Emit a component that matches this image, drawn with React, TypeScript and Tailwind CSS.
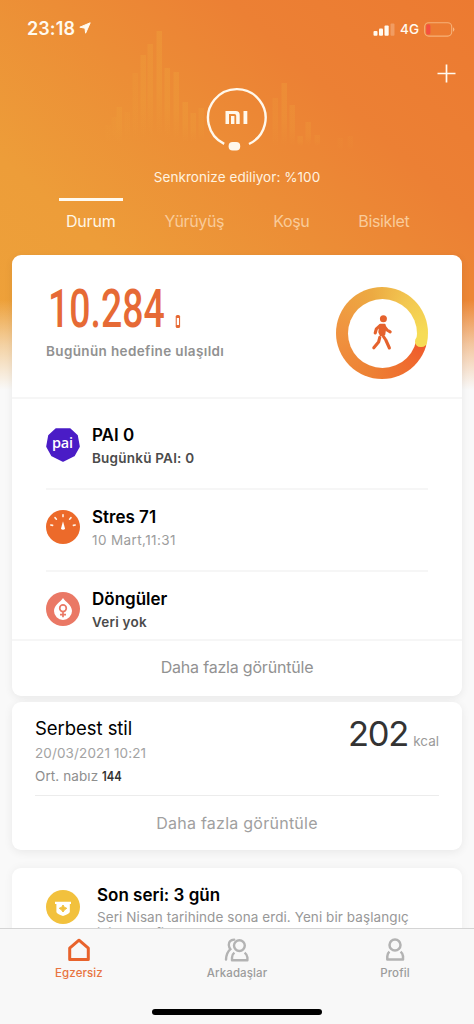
import type { ReactNode } from "react";

const TABS = [
  { label: "Durum", active: true },
  { label: "Yürüyüş", active: false },
  { label: "Koşu", active: false },
  { label: "Bisiklet", active: false },
];

// [x, top, bottom, opacity]
const LEFT_BARS = [
  [107, 125, 143, 0.06],
  [113, 117, 143, 0.1],
  [118, 107, 143, 0.2],
  [126, 112, 140, 0.08],
  [134, 73, 140, 0.14],
  [142, 55, 138, 0.26],
  [149, 44, 136, 0.26],
  [158, 31, 136, 0.32],
  [166, 68, 138, 0.28],
  [175, 72, 140, 0.28],
  [184, 102, 142, 0.26],
  [192, 113, 142, 0.22],
  [200, 108, 140, 0.18],
];

const RIGHT_BARS = [
  [274, 98, 146, 0.16],
  [283, 83, 146, 0.26],
  [291, 105, 146, 0.22],
  [299, 136, 146, 0.18],
  [307, 122, 146, 0.2],
  [316, 135, 146, 0.14],
  [339, 138, 150, 0.06],
  [349, 136, 150, 0.07],
];

function WaveBars() {
  return (
    <svg
      className="pointer-events-none absolute top-0 left-0"
      width="474"
      height="250"
      viewBox="0 0 474 250"
    >
      <defs>
        <linearGradient id="bar" x1="0" y1="0" x2="0" y2="1">
          <stop offset="0" stopColor="#f0a93c" />
          <stop offset="0.55" stopColor="#f0a93c" stopOpacity="0.8" />
          <stop offset="1" stopColor="#f0a93c" stopOpacity="0" />
        </linearGradient>
      </defs>
      {[...LEFT_BARS, ...RIGHT_BARS].map(([x, top, bottom, opacity]) => (
        <rect
          key={x}
          x={x - 1.5}
          y={top}
          width="5.5"
          height={bottom - top}
          fill="url(#bar)"
          opacity={opacity}
        />
      ))}
    </svg>
  );
}

function StatusBar() {
  return (
    <div className="flex h-14 items-center justify-between pr-[19px] pl-[27px] text-[#fffaf0]">
      <div className="flex items-center gap-[4px]">
        <span className="text-[18px] font-semibold tracking-[0.1px]">23:18</span>
        <svg width="12" height="12" viewBox="0 0 12 12" fill="currentColor">
          <path
            d="M11.2 0.8 L6.6 11.2 L6 6.2 L0.8 5.2 Z"
            stroke="currentColor"
            strokeWidth="1"
            strokeLinejoin="round"
          />
        </svg>
      </div>
      <div className="flex items-center pt-[2px]">
        <svg width="22" height="13" viewBox="0 0 22 13" fill="currentColor">
          <rect x="0.5" y="8" width="4" height="4.7" rx="1" />
          <rect x="6" y="5.6" width="4" height="7.1" rx="1" />
          <rect x="11.5" y="2.5" width="4.2" height="10.2" rx="1" />
          <rect x="17.5" y="0.5" width="4" height="12.2" rx="1" opacity="0.25" />
        </svg>
        <span className="ml-[5px] text-[13.5px] font-medium">4G</span>
        <svg className="ml-[5px]" width="31" height="15" viewBox="0 0 31 15">
          <rect
            x="0.7"
            y="0.7"
            width="27"
            height="13.4"
            rx="4"
            fill="none"
            stroke="#fbc796"
            strokeOpacity="0.7"
            strokeWidth="1.1"
          />
          <rect x="2.2" y="2.3" width="4.2" height="10.2" rx="1.6" fill="#f4503f" />
          <path d="M29 5.2 a2.6 2.6 0 0 1 0 4.6 Z" fill="#fbc796" fillOpacity="0.8" />
        </svg>
      </div>
    </div>
  );
}

function DeviceRing() {
  return (
    <svg width="62" height="66" viewBox="0 0 62 66">
      <path
        d="M18.2 57.8 A28.8 28.8 0 1 1 43 58"
        fill="none"
        stroke="#fff8ec"
        strokeWidth="2.4"
      />
      <rect x="22.6" y="56" width="11.6" height="8.4" rx="4" fill="#fff8ec" />
      <g fill="#fff8ec">
        <path d="M19.5 25 h10.2 q4 0 4 4 v9 h-3.5 v-8.3 q0 -1.7 -1.7 -1.7 h-5.5 v10 h-3.5 Z" />
        <rect x="25" y="30" width="3.4" height="8" />
        <rect x="37.5" y="25" width="3.8" height="13" />
      </g>
    </svg>
  );
}

function Header() {
  return (
    <header className="relative h-[255px]">
      <WaveBars />
      <div className="relative">
        <StatusBar />
        <div className="flex h-[30px] items-center justify-end pt-1 pr-[18px]">
          <svg width="19" height="19" viewBox="0 0 19 19" stroke="#fffaf0" strokeWidth="1.7">
            <path d="M9.5 0.5 V18.5 M0.5 9.5 H18.5" />
          </svg>
        </div>
        <div className="flex h-[66px] justify-center">
          <DeviceRing />
        </div>
        <p className="mt-[16px] text-center text-[13.5px] leading-[18px] tracking-[0.06px] text-[#fff3e0]">
          Senkronize ediliyor: %100
        </p>
        <nav className="mt-[12px] flex gap-[49px] pl-[66px]">
          {TABS.map((tab) => (
            <div
              key={tab.label}
              className={`-mx-[7px] border-t-[3px] px-[7px] pt-[9px] text-[16px] leading-[22px] whitespace-nowrap ${
                tab.active
                  ? "border-[#fffaf0] tracking-[-0.2px] text-[#fff6e6]"
                  : "border-transparent tracking-[-0.35px] text-[#f9cb9a]"
              }`}
            >
              {tab.label}
            </div>
          ))}
        </nav>
      </div>
    </header>
  );
}

function GoalRing() {
  return (
    <div className="relative flex size-[92px] items-center justify-center rounded-full bg-[conic-gradient(from_106deg,#ef5a2c_0deg,#ef6a2e_30deg,#ed8134_90deg,#f09440_170deg,#ecaa42_240deg,#f2c651_290deg,#f6dc55_345deg,#f6dc55_360deg)]">
      <div className="flex size-[69px] items-center justify-center rounded-full bg-white">
        <svg width="22" height="36" viewBox="0 0 22 36" fill="none">
          <circle cx="12.4" cy="3.8" r="3.5" fill="#e5622d" />
          <path
            d="M9.2 9.6 h4.4 l0.8 3 l-1 6.8 l-3.8 0.6 l-1.4 -3 Z"
            fill="#e5622d"
            stroke="#e5622d"
            strokeWidth="1.8"
            strokeLinejoin="round"
          />
          <g stroke="#e5622d" strokeWidth="3.1" strokeLinecap="round" strokeLinejoin="round">
            <path d="M9 10.6 L5.4 13.8 L4.2 18" />
            <path d="M14 12.4 L16 15 L19.2 16.8" />
            <path d="M10.8 19 L14.8 25 L18.4 33" />
            <path d="M8.8 22.4 L7.6 27 L2.8 32.8" />
          </g>
        </svg>
      </div>
      {/* rounded tip of the progress arc */}
      <span className="absolute top-[48.5px] left-[79.3px] size-[11.6px] rounded-full bg-[#f6dc55]" />
    </div>
  );
}

function PaiIcon() {
  return (
    <div className="relative size-[34px] shrink-0">
      <svg className="absolute inset-0" width="34" height="34" viewBox="0 0 34 34">
        <path
          d="M10 1 H24 L31 7.5 L33 18.5 L28 27.5 L17 33 L6 27.5 L1 18.5 L3 7.5 Z"
          fill="#4a1cc6"
          stroke="#4a1cc6"
          strokeWidth="1.6"
          strokeLinejoin="round"
        />
      </svg>
      <span className="relative -ml-[1px] block text-center font-['Open_Sans'] text-[14.5px] leading-[29px] font-semibold tracking-[-0.2px] text-white">
        pai
      </span>
    </div>
  );
}

function StressIcon() {
  return (
    <svg className="shrink-0" width="34" height="34" viewBox="0 0 34 34">
      <circle cx="17" cy="17" r="17" fill="#ec6a2a" />
      <g stroke="#fff3e6" strokeWidth="1.6" strokeLinecap="round">
        <path d="M17 4.8 V6.6" />
        <path d="M9 7.6 L10.4 9.2" />
        <path d="M25 7.6 L23.6 9.2" />
        <path d="M4.8 15 L6.6 15.4" />
        <path d="M29.2 15 L27.4 15.4" />
      </g>
      <path d="M17 11.2 L19 18.4 Q18.6 19.8 17 19.8 Q15.4 19.8 15 18.4 Z" fill="#fff" />
    </svg>
  );
}

function CycleIcon() {
  return (
    <svg className="shrink-0" width="34" height="34" viewBox="0 0 34 34">
      <circle cx="17" cy="17" r="17" fill="#ea7865" />
      <path
        d="M17 6 C19.5 10 26 13 26 19 A9 9 0 0 1 8 19 C8 13 14.5 10 17 6 Z"
        fill="#fff"
      />
      <g stroke="#ea7865" strokeWidth="1.7" fill="none">
        <circle cx="17" cy="16.2" r="3.3" />
        <path d="M17 19.5 V25.2 M14 22.6 H20" />
      </g>
    </svg>
  );
}

function BadgeIcon() {
  return (
    <svg className="shrink-0" width="34" height="34" viewBox="0 0 34 34">
      <circle cx="17" cy="17" r="17" fill="#f2c13d" />
      <path d="M9 11.8 H25 V14 H23.8 V22 Q23.2 24 17 26 Q10.8 24 10.4 22 V14 H9 Z" fill="#fff" />
      <path
        d="M17 15 l1.2 2.2 2.6 1.1 -2.3 1.5 -1.5 2.2 -1.5 -2.2 -2.3 -1.5 2.6 -1.1 Z"
        fill="#f2c13d"
        stroke="#f2c13d"
        strokeWidth="1"
        strokeLinejoin="round"
      />
    </svg>
  );
}

function MetricRow({
  icon,
  title,
  subtitle,
  muted,
  last,
}: {
  icon: ReactNode;
  title: string;
  subtitle: string;
  muted?: boolean;
  last?: boolean;
}) {
  return (
    <div
      className={`flex items-start gap-3 pt-[20px] ${last ? "h-[67px]" : "h-[82px] border-b-2 border-[#f6f6f6]"}`}
    >
      {icon}
      <div className="-mt-[4px]">
        <h3 className="text-[17px] leading-[22px] font-semibold text-black">{title}</h3>
        <p
          className={`mt-[2px] text-[13.5px] leading-[20px] ${
            muted
              ? "tracking-[0.4px] text-[#9c9c9c]"
              : "font-semibold tracking-[0.22px] text-[#4b4b4b]"
          }`}
        >
          {subtitle}
        </p>
      </div>
    </div>
  );
}

function StepsCard() {
  return (
    <section className="h-[441px] rounded-[9px] bg-white shadow-[0_2px_8px_rgba(0,0,0,0.07)]">
      <div className="flex h-[144px] items-start justify-between border-b-2 border-[#f6f6f6] px-[34px]">
        <div className="pt-[27px]">
          <div className="flex h-[54px] items-end">
            <span className="block w-[118px] origin-left scale-x-[0.705] pl-[3px] font-[Roboto] text-[53px] leading-[54px] font-medium text-[#e66a35]">
              10.284
            </span>
            <svg className="mb-[7px] ml-[11px]" width="6" height="15" viewBox="0 0 6 15">
              <rect x="0.7" y="1" width="4.4" height="13" rx="1.6" fill="#e66a35" />
              <rect x="1.8" y="4" width="2.2" height="7" fill="#fff" />
            </svg>
          </div>
          <p className="mt-[6px] text-[13.5px] leading-[18px] font-semibold tracking-[0.36px] text-[#919191]">
            Bugünün hedefine ulaşıldı
          </p>
        </div>
        <div className="pt-[32px]">
          <GoalRing />
        </div>
      </div>
      <div className="px-[34px] pt-[9px]">
        <MetricRow icon={<PaiIcon />} title="PAI 0" subtitle="Bugünkü PAI: 0" />
        <MetricRow icon={<StressIcon />} title="Stres 71" subtitle="10 Mart,11:31" muted />
        <MetricRow icon={<CycleIcon />} title="Döngüler" subtitle="Veri yok" last />
      </div>
      <button
        type="button"
        className="flex h-[57px] w-full items-center justify-center border-t-2 border-[#f6f6f6] pb-[3px] text-[16px] tracking-[-0.2px] text-[#929292]"
      >
        Daha fazla görüntüle
      </button>
    </section>
  );
}

function WorkoutCard() {
  return (
    <section className="mt-[6px] h-[148px] rounded-[9px] bg-white px-[23px] shadow-[0_2px_10px_rgba(0,0,0,0.07)]">
      <div className="flex h-[94px] justify-between border-b border-[#ececec]">
        <div className="pt-[14px]">
          <h3 className="text-[18.5px] leading-[24px] tracking-[-0.05px] text-black">Serbest stil</h3>
          <p className="mt-[3px] text-[13.5px] leading-[20px] tracking-[0.12px] text-[#a3a3a3]">
            20/03/2021 10:21
          </p>
          <p className="mt-[2px] text-[13.5px] leading-[22px] tracking-[0.1px] text-[#8e8e8e]">
            Ort. nabız{" "}
            <span className="inline-block origin-left scale-x-[0.83] font-semibold text-[#333]">
              144
            </span>
          </p>
        </div>
        <p className="flex items-baseline gap-[5px] pt-[12px] text-[13.5px] leading-[40px] text-[#9a9a9a]">
          <span className="text-[34.5px] tracking-[-1.2px] text-[#333]">202</span>
          kcal
        </p>
      </div>
      <button
        type="button"
        className="flex h-[54px] w-full items-center justify-center text-[16px] tracking-[0.25px] text-[#a0a0a0]"
      >
        Daha fazla görüntüle
      </button>
    </section>
  );
}

function StreakCard() {
  return (
    <section className="mt-[18px] flex h-[120px] items-start gap-[17px] rounded-[9px] bg-white pt-[22px] pl-[34px] shadow-[0_0_10px_rgba(0,0,0,0.05)]">
      <BadgeIcon />
      <div className="-mt-[7px]">
        <h3 className="text-[17px] leading-[24px] font-semibold text-black">Son seri: 3 gün</h3>
        <p className="mt-[2px] w-[320px] text-[13.5px] leading-[16px] tracking-[0.08px] text-[#989898]">
          Seri Nisan tarihinde sona erdi. Yeni bir başlangıç için hedefine ulaş.
        </p>
      </div>
    </section>
  );
}

function HomeIcon() {
  return (
    <svg width="24" height="24" viewBox="0 0 24 24" fill="none" stroke="#e8632c" strokeWidth="3" strokeLinejoin="round">
      <path d="M12 2.2 L21.3 10.2 V21.6 H2.7 V10.2 Z" />
    </svg>
  );
}

function FriendsIcon() {
  return (
    <svg width="26" height="24" viewBox="0 0 26 24" fill="none" stroke="#b3b3b3" strokeWidth="2.4">
      <circle cx="15.4" cy="7.6" r="5.4" />
      <path d="M10.4 14.6 Q8 16.4 8 19.4 V22.2 H23.4 V19.4 Q23 16.4 20.6 14.6" strokeLinejoin="round" />
      <path
        d="M10.2 1.6 Q4.6 2 4.8 7 Q5 9.4 6.4 11.2 Q2.4 14.6 2 21.6"
        strokeLinecap="round"
      />
    </svg>
  );
}

function ProfileIcon() {
  return (
    <svg width="22" height="24" viewBox="0 0 22 24" fill="none" stroke="#b3b3b3" strokeWidth="2.5">
      <circle cx="11" cy="7" r="5.5" />
      <path d="M5.4 13.6 Q3.4 15.4 3.3 18.2 V21.6 H19 V18.2 Q18.8 15.4 16.6 13.6" strokeLinejoin="round" />
    </svg>
  );
}

function BottomNav() {
  const items = [
    { label: "Egzersiz", icon: <HomeIcon />, color: "text-[#e8743f]" },
    { label: "Arkadaşlar", icon: <FriendsIcon />, color: "text-[#9c9c9c]" },
    { label: "Profil", icon: <ProfileIcon />, color: "text-[#9c9c9c]" },
  ];
  return (
    <nav className="absolute inset-x-0 bottom-0 h-[96px] border-t border-[#d4d4d4] bg-[#f8f8f8]">
      <div className="flex pt-[9px]">
        {items.map((item) => (
          <div key={item.label} className="flex flex-1 flex-col items-center">
            {item.icon}
            <span
              className={`mt-[3px] text-[11.5px] leading-[16px] font-medium tracking-[0.1px] ${item.color}`}
            >
              {item.label}
            </span>
          </div>
        ))}
      </div>
      <div className="mx-auto mt-[28px] h-[6px] w-[170px] rounded-full bg-black" />
    </nav>
  );
}

export default function App() {
  return (
    <div className="relative h-[1024px] w-[474px] overflow-hidden bg-[#f9f9f9] bg-[linear-gradient(to_bottom,rgba(249,249,249,0)_300px,rgba(249,249,249,0.55)_345px,#f9f9f9_390px),linear-gradient(42deg,#eea33a_0px,#ed9d39_180px,#ec8d36_330px,#ec8034_450px,#ec7a31_620px)] bg-[length:100%_400px] bg-no-repeat font-[Inter,sans-serif]">
      <Header />
      <main className="px-[12px]">
        <StepsCard />
        <WorkoutCard />
        <StreakCard />
      </main>
      <BottomNav />
    </div>
  );
}
